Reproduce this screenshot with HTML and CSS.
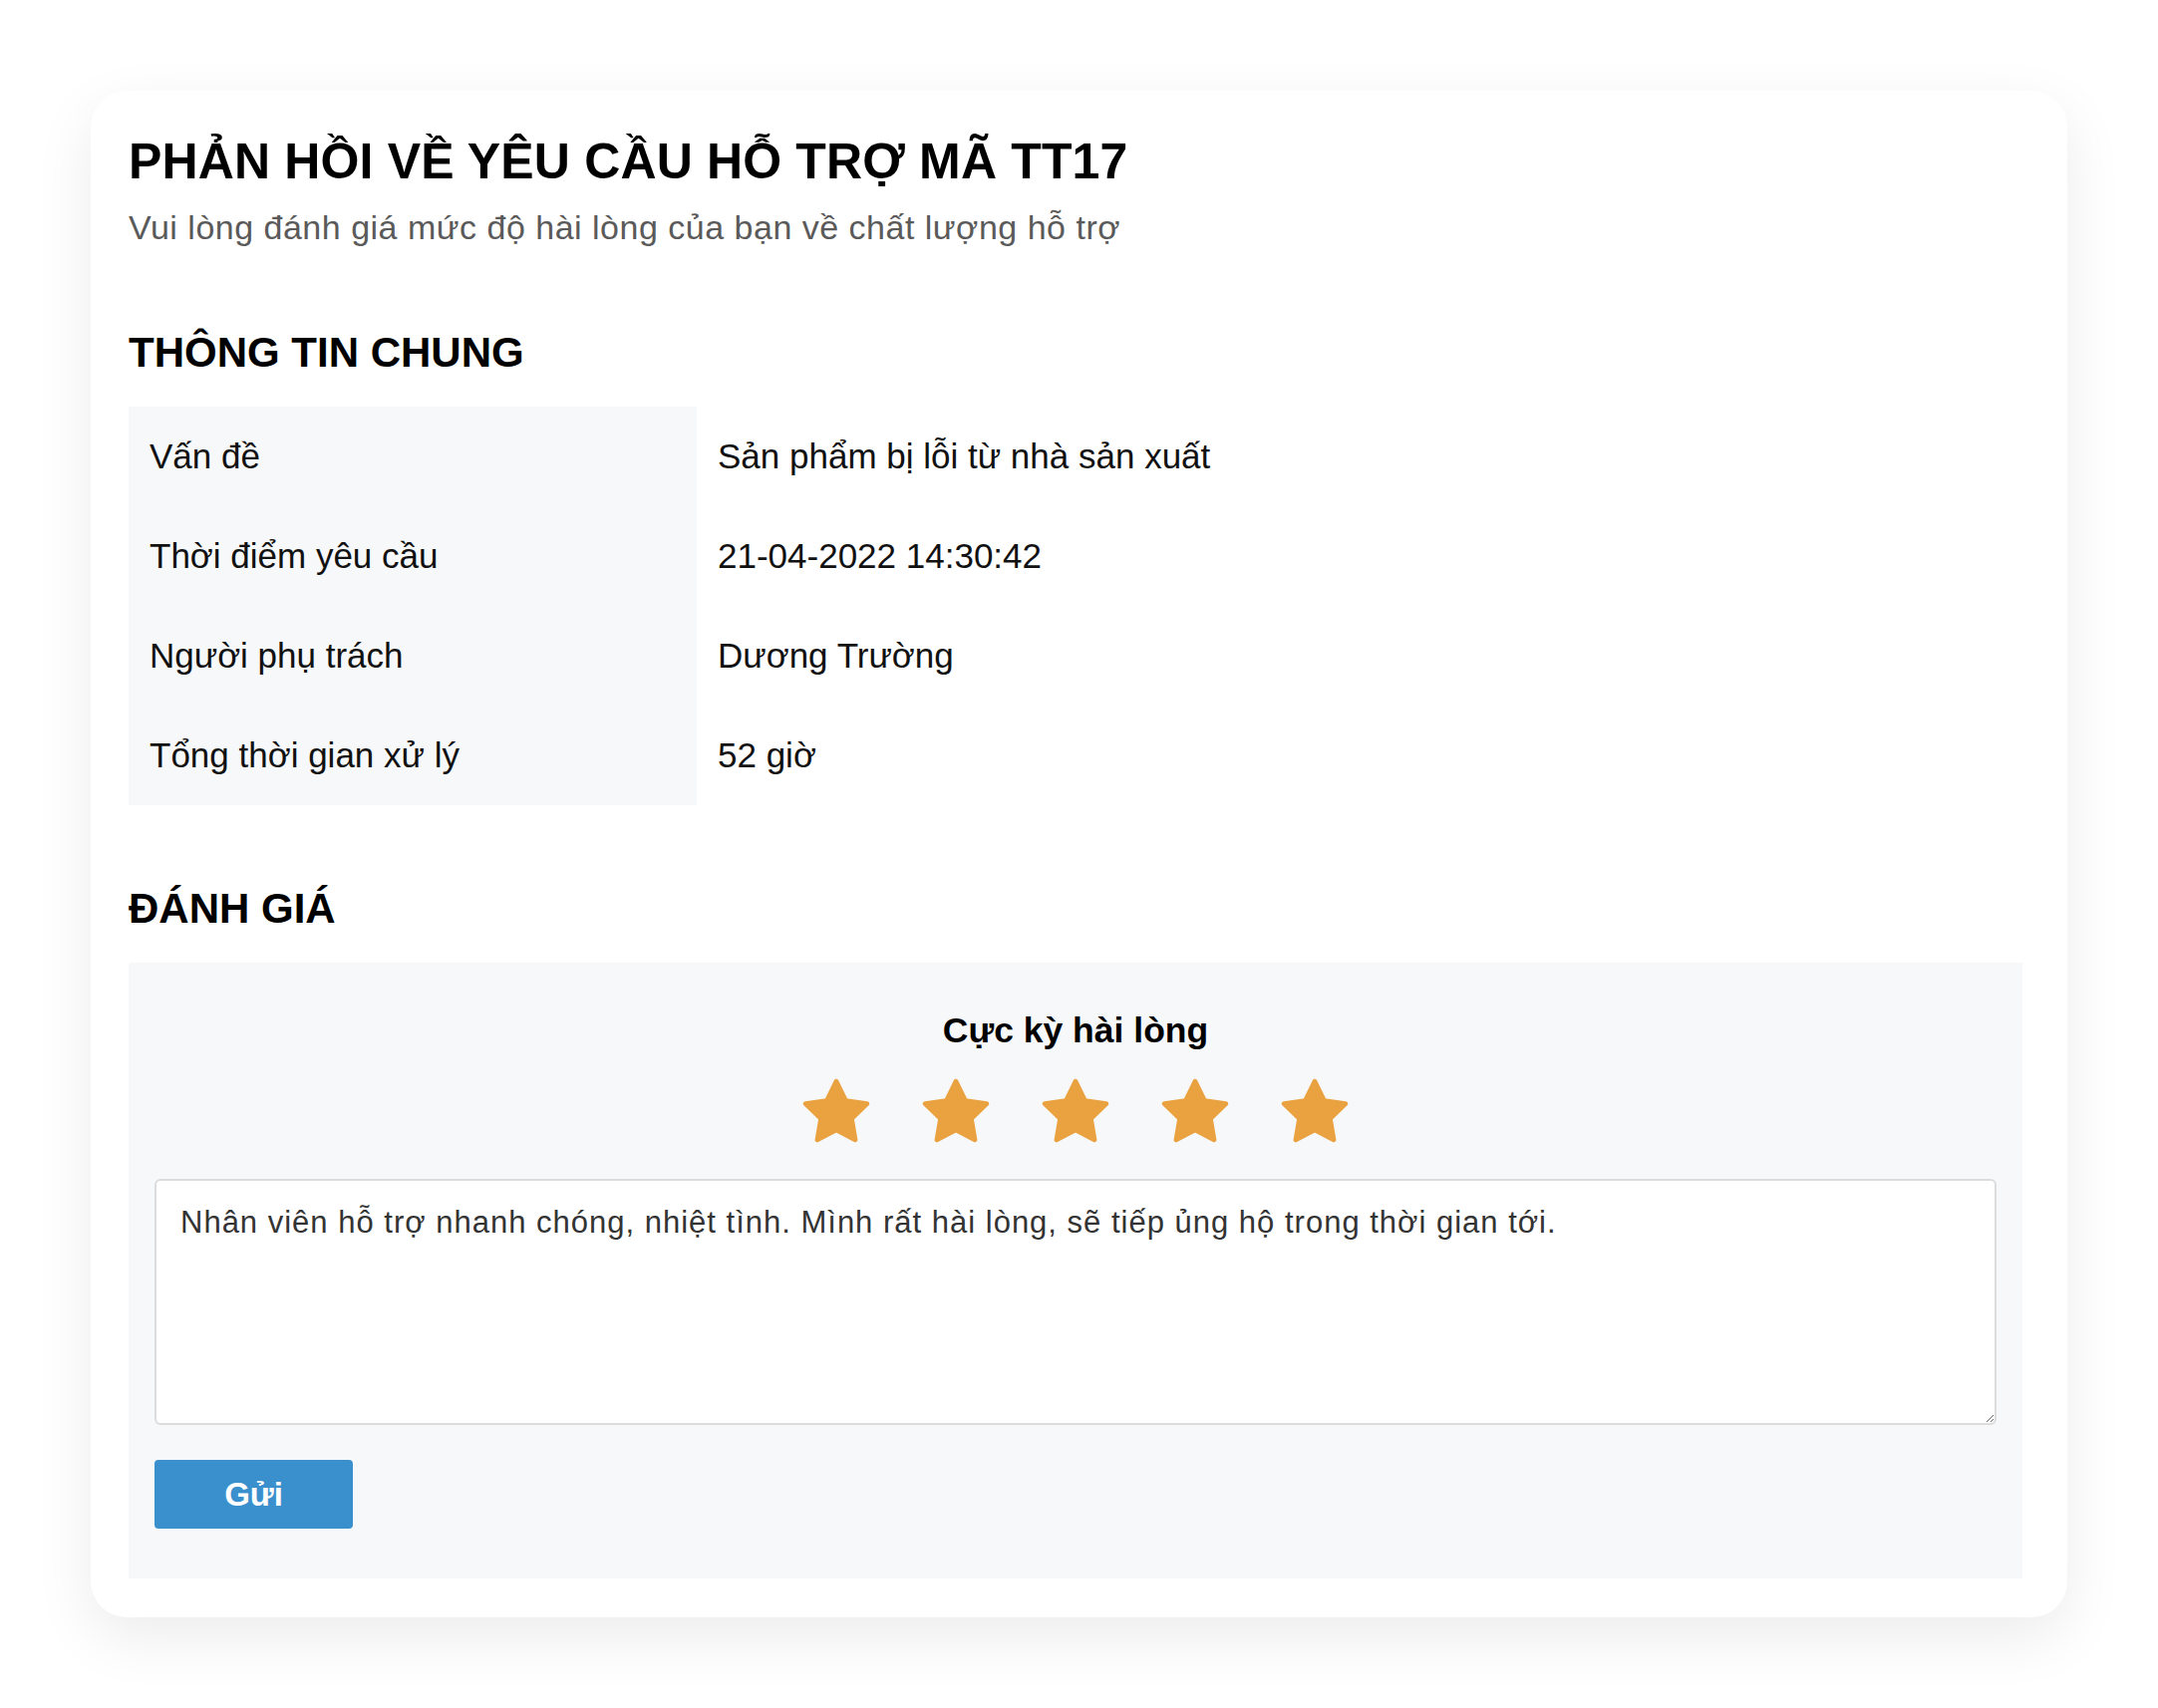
FILE: index.html
```html
<!DOCTYPE html>
<html lang="vi">

<head>
    <meta charset="UTF-8">
    <meta name="viewport" content="width=device-width, initial-scale=1.0">
    <title>Phản hồi yêu cầu hỗ trợ</title>
    <link rel="stylesheet" href="styles.css">
</head>

<body>
    <main class="card">
        <h1 class="title">PHẢN HỒI VỀ YÊU CẦU HỖ TRỢ MÃ TT17</h1>
        <p class="subtitle">Vui lòng đánh giá mức độ hài lòng của bạn về chất lượng hỗ trợ</p>

        <h2 class="section-title">THÔNG TIN CHUNG</h2>
        <table class="info">
            <tr>
                <th>Vấn đề</th>
                <td>Sản phẩm bị lỗi từ nhà sản xuất</td>
            </tr>
            <tr>
                <th>Thời điểm yêu cầu</th>
                <td>21-04-2022 14:30:42</td>
            </tr>
            <tr>
                <th>Người phụ trách</th>
                <td>Dương Trường</td>
            </tr>
            <tr>
                <th>Tổng thời gian xử lý</th>
                <td>52 giờ</td>
            </tr>
        </table>

        <h2 class="section-title">ĐÁNH GIÁ</h2>
        <form class="rating">
            <div class="rating-label">Cực kỳ hài lòng</div>
            <div class="stars">
                <svg class="star" viewBox="1 1 22 22"><path d="M12 2l3.09 6.26L22 9.27l-5 4.87 1.18 6.88L12 17.77l-6.18 3.25L7 14.14 2 9.27l6.91-1.01L12 2z"/></svg>
                <svg class="star" viewBox="1 1 22 22"><path d="M12 2l3.09 6.26L22 9.27l-5 4.87 1.18 6.88L12 17.77l-6.18 3.25L7 14.14 2 9.27l6.91-1.01L12 2z"/></svg>
                <svg class="star" viewBox="1 1 22 22"><path d="M12 2l3.09 6.26L22 9.27l-5 4.87 1.18 6.88L12 17.77l-6.18 3.25L7 14.14 2 9.27l6.91-1.01L12 2z"/></svg>
                <svg class="star" viewBox="1 1 22 22"><path d="M12 2l3.09 6.26L22 9.27l-5 4.87 1.18 6.88L12 17.77l-6.18 3.25L7 14.14 2 9.27l6.91-1.01L12 2z"/></svg>
                <svg class="star" viewBox="1 1 22 22"><path d="M12 2l3.09 6.26L22 9.27l-5 4.87 1.18 6.88L12 17.77l-6.18 3.25L7 14.14 2 9.27l6.91-1.01L12 2z"/></svg>
            </div>
            <textarea class="comment">Nhân viên hỗ trợ nhanh chóng, nhiệt tình. Mình rất hài lòng, sẽ tiếp ủng hộ trong thời gian tới.</textarea>
            <button type="button" class="send">Gửi</button>
        </form>
    </main>
</body>

</html>
```

FILE: styles.css
```css
* {
    box-sizing: border-box;
    margin: 0;
    padding: 0;
    font-family: "Liberation Sans", Arial, Helvetica, sans-serif;
}

body {
    background-color: white;
    padding: 91px;
}

.card {
    background-color: white;
    border-radius: 36px;
    box-shadow: 0 20px 60px rgba(0, 0, 0, 0.08);
    padding: 42px 45px 39px 38px;
}

.title {
    font-size: 50px;
    line-height: 58px;
    font-weight: bold;
    letter-spacing: 0.15px;
    color: black;
}

.subtitle {
    margin-top: 17px;
    font-size: 34px;
    line-height: 40px;
    letter-spacing: 0.5px;
    color: #5a5a5a;
}

.section-title {
    margin-top: 82px;
    font-size: 42px;
    line-height: 48px;
    font-weight: bold;
    color: black;
}

.section-title + .rating,
.section-title + .info {
    margin-top: 30px;
}

.info {
    border-collapse: collapse;
    width: 100%;
}

.info th,
.info td {
    height: 100px;
    padding: 0 21px;
    text-align: left;
    vertical-align: middle;
    font-size: 35px;
    font-weight: normal;
    color: #111;
}

.info th {
    width: 570px;
    background-color: #f7f8fa;
}

.info + .section-title {
    margin-top: 80px;
}

.rating {
    display: flex;
    flex-direction: column;
    background-color: #f7f8fa;
    padding: 48px 26px 50px;
}

.rating-label {
    text-align: center;
    font-size: 35.5px;
    line-height: 40px;
    font-weight: bold;
    color: black;
}

.stars {
    display: flex;
    justify-content: center;
    gap: 52px;
    margin-top: 28px;
}

.star {
    width: 68px;
    height: 68px;
    fill: #e9a23f;
    stroke: #e9a23f;
    stroke-width: 1.5;
    stroke-linejoin: round;
}

.comment {
    display: block;
    margin-top: 33px;
    width: 100%;
    height: 247px;
    border: 2px solid #dcdcdc;
    border-radius: 6px;
    padding: 24px 24px;
    background-color: white;
    font-size: 31px;
    line-height: 1.15;
    letter-spacing: 1px;
    color: #333;
}

.send {
    align-self: flex-start;
    margin-top: 35px;
    width: 199px;
    height: 69px;
    border: none;
    border-radius: 4px;
    background-color: #3a8fcd;
    color: white;
    font-size: 33px;
    font-weight: bold;
}
```
